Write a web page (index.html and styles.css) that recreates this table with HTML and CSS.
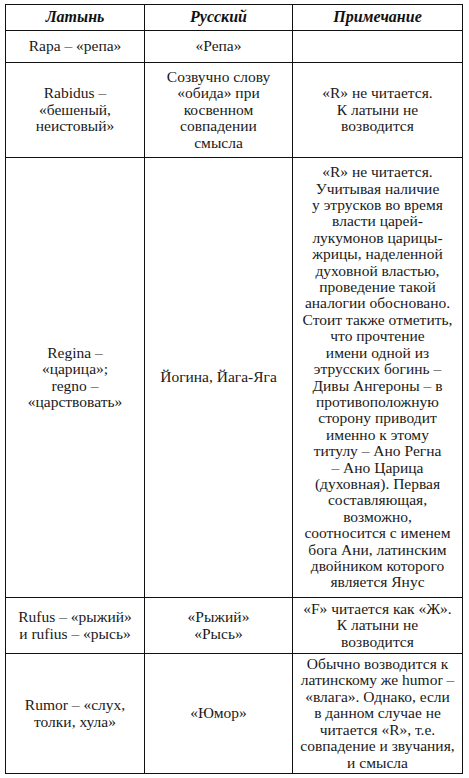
FILE: index.html
```html
<!DOCTYPE html>
<html lang="ru">
<head>
<meta charset="utf-8">
<title>Таблица</title>
<link rel="stylesheet" href="styles.css">
</head>
<body>
<div class="grid">
  <div class="cell"><p class="txt head">Латынь</p></div>
  <div class="cell"><p class="txt head">Русский</p></div>
  <div class="cell"><p class="txt head">Примечание</p></div>

  <div class="cell"><p class="txt">Rapa – «репа»</p></div>
  <div class="cell"><p class="txt">«Репа»</p></div>
  <div class="cell"></div>

  <div class="cell"><p class="txt">Rabidus –<br>«бешеный,<br>неистовый»</p></div>
  <div class="cell"><p class="txt">Созвучно слову<br>«обида» при<br>косвенном<br>совпадении<br>смысла</p></div>
  <div class="cell"><p class="txt">«R» не читается.<br>К латыни не<br>возводится</p></div>

  <div class="cell"><p class="txt">Regina –<br>«царица»;<br>regno –<br>«царствовать»</p></div>
  <div class="cell"><p class="txt">Йогина, Йага-Яга</p></div>
  <div class="cell"><p class="txt">«R» не читается.<br>Учитывая наличие<br>у этрусков во время<br>власти царей-<br>лукумонов царицы-<br>жрицы, наделенной<br>духовной властью,<br>проведение такой<br>аналогии обосновано.<br>Стоит также отметить,<br>что прочтение<br>имени одной из<br>этрусских богинь –<br>Дивы Ангероны – в<br>противоположную<br>сторону приводит<br>именно к этому<br>титулу – Ано Регна<br>– Ано Царица<br>(духовная). Первая<br>составляющая,<br>возможно,<br>соотносится с именем<br>бога Ани, латинским<br>двойником которого<br>является Янус</p></div>

  <div class="cell"><p class="txt">Rufus – «рыжий»<br>и rufius – «рысь»</p></div>
  <div class="cell"><p class="txt">«Рыжий»<br>«Рысь»</p></div>
  <div class="cell"><p class="txt">«F» читается как «Ж».<br>К латыни не<br>возводится</p></div>

  <div class="cell"><p class="txt">Rumor – «слух,<br>толки, хула»</p></div>
  <div class="cell"><p class="txt">«Юмор»</p></div>
  <div class="cell"><p class="txt">Обычно возводится к<br>латинскому же humor –<br>«влага». Однако, если<br>в данном случае не<br>читается «R», т.е.<br>совпадение и звучания,<br>и смысла</p></div>
</div>
</body>
</html>
```
FILE: styles.css
```css
html {
  background: #ffffff;
}
body {
  margin: 0;
  padding: 4px 6px 0 5px;
}
.grid {
  display: grid;
  width: 458px;
  box-sizing: border-box;
  grid-template-columns: 138px 147px 169px;
  grid-template-rows: 25px 31px 94px 439px 55px 119px;
  gap: 1px;
  padding: 1px;
  background: #111111;
}
.cell {
  background: #ffffff;
  display: flex;
  align-items: center;
  justify-content: center;
  padding: 0 2px;
}
.txt {
  margin: 0;
  font-family: "Times New Roman";
  font-size: 15.5px;
  line-height: 16.4px;
  color: #1a1a1a;
  text-align: center;
  white-space: nowrap;
}
.head {
  font-weight: bold;
  font-style: italic;
  font-size: 16px;
  color: #111111;
}
```
